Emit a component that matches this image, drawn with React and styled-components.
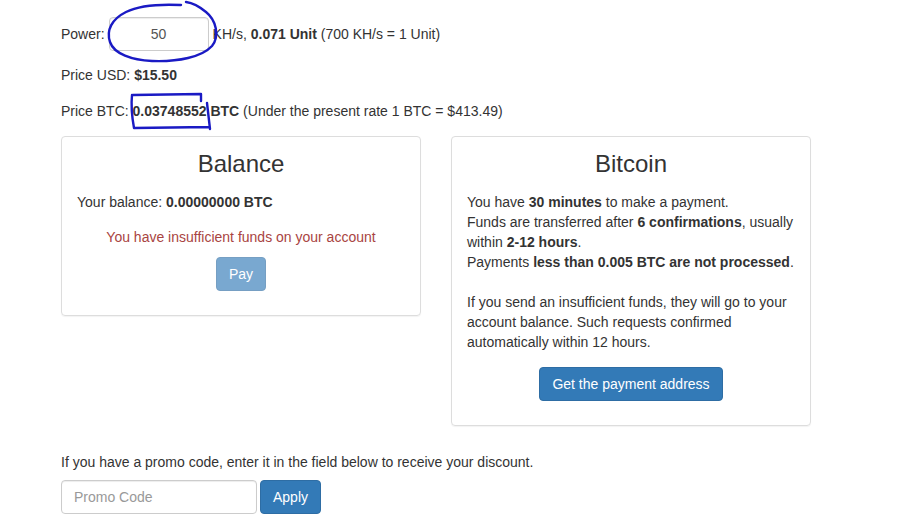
import styled, { createGlobalStyle } from "styled-components";

const Global = createGlobalStyle`
    body {
        margin: 0;
        background: #fff;
        font-family: "Liberation Sans", Arial, sans-serif;
        font-size: 14px;
        line-height: 20px;
        color: #333;
    }
    * { box-sizing: border-box; }
`;

const Page = styled.div`
    position: relative;
    width: 750px;
    padding: 17px 0 0 0;
    margin-left: 61px;
`;

const PowerRow = styled.div`
    display: flex;
    align-items: center;
    height: 34px;
`;

const PowerInput = styled.input`
    width: 100px;
    height: 34px;
    margin: 0 4px 0 4px;
    padding: 6px 12px;
    border: 1px solid #ccc;
    border-radius: 4px;
    box-shadow: inset 0 1px 1px rgba(0,0,0,.075);
    font: inherit;
    color: #555;
    text-align: center;
`;

const Line = styled.p`
    margin: ${props => props.top}px 0 0 0;
`;

const Panels = styled.div`
    display: grid;
    grid-template-columns: 360px 360px;
    column-gap: 30px;
    align-items: start;
    margin-top: 15px;
`;

const Panel = styled.div`
    border: 1px solid #ddd;
    border-radius: 4px;
    box-shadow: 0 1px 1px rgba(0,0,0,.05);
    padding: 14px 15px 24px;
`;

const Title = styled.h3`
    margin: 0 0 15px;
    font-size: 24px;
    font-weight: 400;
    line-height: 26px;
    text-align: center;
`;

const Warning = styled.p`
    margin: 15px 0 10px;
    color: #a94442;
    text-align: center;
`;

const Center = styled.div`
    display: flex;
    justify-content: center;
    margin-top: ${props => props.top || 0}px;
`;

const Button = styled.button`
    height: 34px;
    padding: 6px 12px;
    border: 1px solid #2e6da4;
    border-radius: 4px;
    background: #337ab7;
    color: #fff;
    font: inherit;
    cursor: pointer;
    &:disabled {
        opacity: .65;
        cursor: not-allowed;
    }
`;

const Promo = styled.div`
    margin-top: 26px;
`;

const PromoRow = styled.div`
    display: flex;
    gap: 3px;
    margin-top: 8px;
`;

const PromoInput = styled.input`
    width: 196px;
    height: 34px;
    padding: 6px 12px;
    border: 1px solid #ccc;
    border-radius: 4px;
    box-shadow: inset 0 1px 1px rgba(0,0,0,.075);
    font: inherit;
    color: #555;
    &::placeholder { color: #999; }
`;

const Scribble = styled.svg`
    position: absolute;
    left: -61px;
    top: 0;
    pointer-events: none;
`;

export default function App() {
    return (
        <>
            <Global />
            <Page>
                <PowerRow>
                    Power:
                    <PowerInput defaultValue="50" />
                    KH/s,&nbsp;<b>0.071 Unit</b>&nbsp;(700 KH/s = 1 Unit)
                </PowerRow>
                <Line top={14}>Price USD: <b>$15.50</b></Line>
                <Line top={16}>Price BTC: <b>0.03748552 BTC</b> (Under the present rate 1 BTC = $413.49)</Line>

                <Panels>
                    <Panel>
                        <Title>Balance</Title>
                        <p style={{ margin: 0 }}>Your balance: <b>0.00000000 BTC</b></p>
                        <Warning>You have insufficient funds on your account</Warning>
                        <Center>
                            <Button disabled>Pay</Button>
                        </Center>
                    </Panel>
                    <Panel>
                        <Title>Bitcoin</Title>
                        <p style={{ margin: 0 }}>
                            You have <b>30 minutes</b> to make a payment.<br />
                            Funds are transferred after <b>6 confirmations</b>, usually within <b>2-12 hours</b>.<br />
                            Payments <b>less than 0.005 BTC are not processed</b>.<br />
                            <br />
                            If you send an insufficient funds, they will go to your account balance. Such requests confirmed automatically within 12 hours.
                        </p>
                        <Center top={15}>
                            <Button>Get the payment address</Button>
                        </Center>
                    </Panel>
                </Panels>

                <Promo>
                    If you have a promo code, enter it in the field below to receive your discount.
                    <PromoRow>
                        <PromoInput placeholder="Promo Code" />
                        <Button>Apply</Button>
                    </PromoRow>
                </Promo>

                <Scribble width="919" height="140" viewBox="0 0 919 140">
                    <g fill="none" stroke="#1a1ac4" strokeWidth="2.4" strokeLinecap="round" strokeLinejoin="round">
                        <path d="M181 5 C160 4 138 6 126 12 C112 19 106 30 110 42 C114 54 132 60 152 61 C178 62 202 57 212 46 C220 36 216 20 206 12 C200 7 193 3 186 2" />
                        <path d="M133 95 L201 94 L201 101 M207 103 C208 112 209 121 210 129 M209 127 L134 128 C132 117 131 105 132 95" />
                    </g>
                </Scribble>
            </Page>
        </>
    );
}
